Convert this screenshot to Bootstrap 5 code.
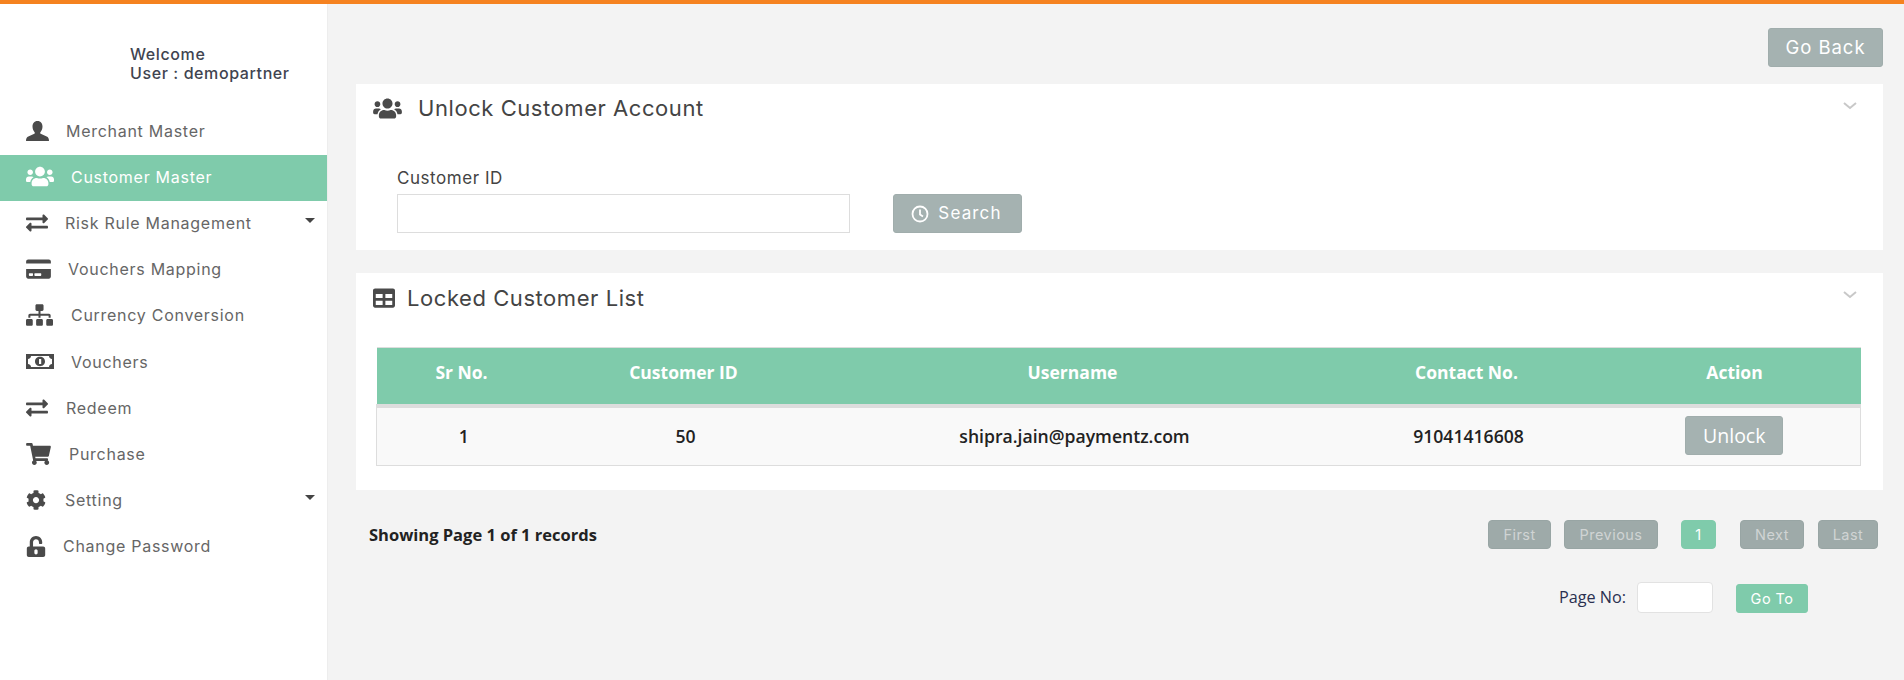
<!DOCTYPE html>
<html lang="en">
<head>
<meta charset="utf-8">
<title>Unlock Customer Account</title>
<link href="https://cdn.jsdelivr.net/npm/bootstrap@5.3.0/dist/css/bootstrap.min.css" rel="stylesheet">
<style>
html,body{height:100%;overflow:hidden}
body{background:#f3f3f3;font-family:Inter,"Liberation Sans",sans-serif;color:#444}
.topstrip{height:4px;background:#f58220}
.shell{height:676px}
.sidepane{width:328px;flex:none;background:#fff;border-right:1px solid #ededed}
.welcomebox{padding:41px 0 0 130px;height:105px;font-size:16px;line-height:18.5px;font-weight:500;color:#3f4450;letter-spacing:.6px}
.menuitem{height:46.2px;display:flex;align-items:center;padding:0 0 3px 26px;font-size:16px;color:#666;letter-spacing:.72px;text-decoration:none}
.menuitem.onitem{background:#7fcbab;color:#fff}
.icobox{display:block;flex:none}
.icobox svg{display:block;fill:#4a4a4a}
.onitem .icobox svg{fill:#fff}
.w37{width:37px}.w38{width:38px}.w39{width:39px}.w40{width:40px}.w42{width:42px}.w43{width:43px}.w45{width:45px}
.caretmark{margin-left:auto;margin-right:12px;margin-top:-5px;width:0;height:0;border-left:5px solid transparent;border-right:5px solid transparent;border-top:5px solid #444}
.mainpane{padding:24px 21px 0 28px;min-width:0}
.backbtn,.graybtn{background:#a5b2b1;border:1px solid #a0adac;color:#fff;border-radius:3px}
.backbtn{width:115px;height:39px;font-size:18.500px;padding:1px 0 0;letter-spacing:.95px;display:block;margin-left:auto;margin-bottom:17px}
.panelbox{background:#fff;border:0;border-radius:0;position:relative}
.firstpanel{height:166px;margin-bottom:23px}
.secondpanel{height:217px;margin-bottom:30px}
.paneltitle{font-size:22px;font-weight:400;color:#444;letter-spacing:.56px;margin:0;display:flex;align-items:center;line-height:24px}
.firstpanel .paneltitle{padding:12px 0 0 17px}
.secondpanel .paneltitle{padding:13px 0 0 17px}
.paneltitle svg{fill:#4a4a4a;display:block;flex:none}
.chevmark{position:absolute;right:26px;top:18px;stroke:#c8c8c8;fill:none;stroke-width:2}
.formarea{padding:48px 0 0 41px;display:flex;align-items:flex-end}
.fieldlabel{font-size:17px;line-height:20px;margin-bottom:6px;color:#444;letter-spacing:.55px}
.idinput{width:453px;height:39px;border:1px solid #ddd;border-radius:0;padding:0 8px}
.searchbtn{width:129px;height:39px;margin-left:43px;font-size:17px;letter-spacing:1.15px;padding:0 2px 0 0;display:flex;align-items:center;justify-content:center;gap:9px}
.searchbtn svg{fill:none;stroke:#fff;stroke-width:1.8}
.tablewrap{padding:37px 22px 0 20px}
.locktable{table-layout:fixed;width:1484px;margin:0;font-family:"Open Sans",sans-serif;border-color:#ddd}
.colw170{width:170px}.colw274{width:274px}.colw504{width:504px}.colw284{width:284px}.colw252{width:252px}
.locktable th{background:#7fcbab;color:#fff;font-size:17.5px;font-weight:700;text-align:center;vertical-align:middle;height:58px;padding:0 0 8px;border-top:1px solid #ddd;border-bottom:4px solid #ddd;box-shadow:none}
.locktable td{background:#f9f9f9;font-size:17.6px;font-weight:600;color:#222;text-align:center;vertical-align:middle;height:60px;padding:0 0 1px 4px;border-bottom:1px solid #ddd;box-shadow:none}
.locktable td:first-child{border-left:1px solid #ddd}
.locktable td:last-child{border-right:1px solid #ddd;padding-left:0}
.unlockbtn{width:98px;height:39px;padding:0;font-size:19.5px;font-family:"Open Sans",sans-serif}
.pagerrow{padding:0 5px 0 13px;height:29px;margin-bottom:33px}
.recordtext{font-family:"Open Sans",sans-serif;font-size:16.5px;font-weight:700;color:#222;padding-top:2px}
.pagerbtn{height:29px;padding:0;font-size:14.5px;border-radius:4px;background:#9eaaa9;border:1px solid #98a5a4;color:#d0d4d4;letter-spacing:.45px}
.p63{width:63px}.p94{width:94px;margin-left:13px}.p64{width:64px;margin-left:24px}.p60{width:60px;margin-left:14px}
.pagecur{width:35px;margin-left:23px;background:#7fcbab;border-color:#7fcbab;color:#fff}
.gotorow{padding-right:75px}
.gotolabel{font-family:"Open Sans",sans-serif;font-size:16.2px;color:#2a3050;margin-right:11px}
.gotoinput{width:76px;height:31px;border:1px solid #e2e2e2;border-radius:4px;background:#fff;padding:0 6px}
.gotobtn{width:72px;height:29px;margin-left:23px;margin-top:2px;padding:0;font-size:14.5px;background:#7fcbab;border:1px solid #7fcbab;color:#fff;border-radius:3px;letter-spacing:.45px}
</style>
</head>
<body>
<svg width="0" height="0" class="d-block position-absolute">
<symbol id="i-users" viewBox="0 0 640 512"><path d="M96 224c35.300 0 64-28.700 64-64s-28.700-64-64-64-64 28.700-64 64 28.700 64 64 64zm448 0c35.300 0 64-28.700 64-64s-28.700-64-64-64-64 28.700-64 64 28.700 64 64 64zm32 32h-64c-17.600 0-33.500 7.100-45.100 18.600 40.300 22.100 68.900 62 75.100 109.400h66c17.700 0 32-14.300 32-32v-32c0-35.300-28.700-64-64-64zm-256 0c61.900 0 112-50.100 112-112S381.900 32 320 32 208 82.100 208 144s50.100 112 112 112zm76.800 32h-8.300c-20.800 10-43.900 16-68.500 16s-47.600-6-68.500-16h-8.300C179.600 288 128 339.600 128 403.200V432c0 26.500 21.500 48 48 48h288c26.500 0 48-21.500 48-48v-28.800c0-63.600-51.600-115.200-115.200-115.200zm-223.700-13.400C161.500 263.100 145.600 256 128 256H64c-35.300 0-64 28.700-64 64v32c0 17.700 14.300 32 32 32h65.900c6.300-47.400 34.900-87.300 75.200-109.400z"/></symbol>
<symbol id="i-swap" viewBox="0 0 512 512"><path d="M0 168v-16c0-13.255 10.745-24 24-24h360V80c0-21.367 25.899-32.042 40.971-16.971l80 80c9.372 9.373 9.372 24.569 0 33.941l-80 80C409.956 271.982 384 261.456 384 240v-48H24c-13.255 0-24-10.745-24-24zm488 152H128v-48c0-21.314-25.862-32.080-40.971-16.971l-80 80c-9.372 9.373-9.372 24.569 0 33.941l80 80C102.057 463.997 128 453.437 128 432v-48h360c13.255 0 24-10.745 24-24v-16c0-13.255-10.745-24-24-24z"/></symbol>
<symbol id="i-chev" viewBox="0 0 14 8"><path d="M1 1l6 5 6-5"/></symbol>
</svg>
<div class="topstrip"></div>
<div class="d-flex shell">
  <nav class="sidepane">
    <div class="welcomebox">Welcome<br>User : demopartner</div>
    <a class="menuitem" href="#"><span class="icobox w40"><svg width="23" height="20" viewBox="0 0 23 20"><path d="M11.500 0c3.400 0 5 2.500 5 5.600 0 2.300-.9 4.400-2.100 5.700-.4.500-.3 1.200.3 1.500l6 2.600c1.400.7 2.300 1.700 2.300 4.600H0c0-2.900.9-3.900 2.300-4.600l6-2.600c.6-.3.700-1 .3-1.500C7.400 10 6.500 7.900 6.500 5.600 6.500 2.500 8.100 0 11.500 0z"/></svg></span>Merchant Master</a>
    <a class="menuitem onitem" href="#"><span class="icobox w45"><svg width="28" height="23"><use href="#i-users"/></svg></span>Customer Master</a>
    <a class="menuitem" href="#"><span class="icobox w39"><svg width="22" height="22"><use href="#i-swap"/></svg></span>Risk Rule Management<span class="caretmark"></span></a>
    <a class="menuitem" href="#"><span class="icobox w42"><svg width="25" height="22" viewBox="0 0 576 512"><path d="M0 432c0 26.500 21.500 48 48 48h480c26.500 0 48-21.500 48-48V256H0v176zm192-68c0-6.600 5.400-12 12-12h136c6.600 0 12 5.400 12 12v40c0 6.600-5.400 12-12 12H204c-6.600 0-12-5.400-12-12v-40zm-128 0c0-6.600 5.400-12 12-12h72c6.600 0 12 5.400 12 12v40c0 6.600-5.400 12-12 12H76c-6.600 0-12-5.400-12-12v-40zM576 80v48H0V80c0-26.500 21.500-48 48-48h480c26.500 0 48 21.500 48 48z"/></svg></span>Vouchers Mapping</a>
    <a class="menuitem" href="#"><span class="icobox w45"><svg width="27" height="22" viewBox="0 0 640 512"><path d="M128 352H32c-17.670 0-32 14.330-32 32v96c0 17.670 14.330 32 32 32h96c17.670 0 32-14.330 32-32v-96c0-17.670-14.330-32-32-32zm-24-80h192v48h48v-48h192v48h48v-57.590c0-21.170-17.230-38.410-38.410-38.410H344v-64h40c17.670 0 32-14.330 32-32V32c0-17.670-14.330-32-32-32H256c-17.670 0-32 14.330-32 32v96c0 17.670 14.330 32 32 32h40v64H94.410C73.230 224 56 241.230 56 262.410V320h48v-48zm264 80h-96c-17.670 0-32 14.330-32 32v96c0 17.670 14.330 32 32 32h96c17.670 0 32-14.330 32-32v-96c0-17.670-14.330-32-32-32zm240 0h-96c-17.670 0-32 14.330-32 32v96c0 17.670 14.330 32 32 32h96c17.670 0 32-14.330 32-32v-96c0-17.670-14.330-32-32-32z"/></svg></span>Currency Conversion</a>
    <a class="menuitem" href="#"><span class="icobox w45"><svg width="28" height="15" viewBox="0 0 28 15"><path fill-rule="evenodd" d="M0 0h28v15H0zM2 2v11h24V2z"/><path d="M2 2h3c0 1.600-1.400 3-3 3zM26 2h-3c0 1.600 1.400 3 3 3zM2 13h3c0-1.600-1.400-3-3-3zM26 13h-3c0-1.600 1.400-3 3-3z"/><path fill-rule="evenodd" d="M14 2.800c-2.900 0-5 2-5 4.700s2.100 4.700 5 4.700 5-2 5-4.700-2.100-4.700-5-4.700zM13 5h2.200v5H13z"/></svg></span>Vouchers</a>
    <a class="menuitem" href="#"><span class="icobox w40"><svg width="22" height="22"><use href="#i-swap"/></svg></span>Redeem</a>
    <a class="menuitem" href="#"><span class="icobox w43"><svg width="25" height="22" viewBox="0 0 576 512"><path d="M528.120 301.319l47.273-208C578.806 78.301 567.391 64 551.990 64H159.208l-9.166-44.810C147.758 8.021 137.930 0 126.529 0H24C10.745 0 0 10.745 0 24v16c0 13.255 10.745 24 24 24h69.883l70.248 343.435C147.325 417.100 136 435.222 136 456c0 30.928 25.072 56 56 56s56-25.072 56-56c0-15.674-6.447-29.835-16.824-40h209.647C430.447 426.165 424 440.326 424 456c0 30.928 25.072 56 56 56s56-25.072 56-56c0-22.172-12.888-41.332-31.579-50.405l5.517-24.276c3.413-15.018-8.002-29.319-23.403-29.319H218.117l-6.545-32h293.145c11.206 0 20.920-7.754 23.403-18.681z"/></svg></span>Purchase</a>
    <a class="menuitem" href="#"><span class="icobox w39"><svg width="20" height="20" viewBox="0 0 512 512"><path d="M487.400 315.700l-42.600-24.600c4.300-23.200 4.300-47 0-70.200l42.600-24.600c4.900-2.800 7.100-8.600 5.500-14-11.100-35.600-30-67.800-54.700-94.600-3.800-4.100-10-5.100-14.800-2.300L380.800 110c-17.900-15.400-38.500-27.300-60.800-35.100V25.800c0-5.600-3.900-10.500-9.400-11.700-36.700-8.200-74.300-7.800-109.200 0-5.500 1.200-9.400 6.100-9.400 11.700V75c-22.200 7.900-42.800 19.800-60.800 35.100L88.700 85.500c-4.900-2.800-11-1.900-14.800 2.300-24.700 26.700-43.600 58.900-54.700 94.600-1.700 5.400.6 11.200 5.500 14L67.300 221c-4.300 23.200-4.300 47 0 70.200l-42.600 24.600c-4.900 2.800-7.100 8.600-5.500 14 11.100 35.600 30 67.800 54.700 94.600 3.800 4.100 10 5.100 14.800 2.300l42.600-24.600c17.900 15.400 38.500 27.300 60.800 35.100v49.200c0 5.600 3.900 10.500 9.400 11.700 36.700 8.200 74.300 7.800 109.200 0 5.500-1.200 9.400-6.100 9.400-11.700v-49.200c22.200-7.900 42.800-19.800 60.800-35.100l42.600 24.600c4.900 2.800 11 1.900 14.800-2.300 24.700-26.700 43.600-58.900 54.700-94.600 1.500-5.500-.7-11.300-5.600-14.100zM256 336c-44.100 0-80-35.900-80-80s35.900-80 80-80 80 35.900 80 80-35.900 80-80 80z"/></svg></span>Setting<span class="caretmark"></span></a>
    <a class="menuitem" href="#"><span class="icobox w37"><svg width="20" height="21" viewBox="0 0 448 512"><path d="M400 256H152V152.900c0-39.600 31.700-72.500 71.300-72.900 40-.4 72.700 32.100 72.700 72v16c0 13.300 10.700 24 24 24h32c13.300 0 24-10.700 24-24v-16C376 68 307.500-.3 223.500 0 139.500.3 72 69.500 72 153.500V256H48c-26.500 0-48 21.500-48 48v160c0 26.500 21.500 48 48 48h352c26.500 0 48-21.500 48-48V304c0-26.500-21.500-48-48-48zM264 408c0 22.100-17.900 40-40 40s-40-17.900-40-40v-48c0-22.100 17.900-40 40-40s40 17.900 40 40v48z"/></svg></span>Change Password</a>
  </nav>
  <main class="flex-grow-1 mainpane">
    <button class="btn backbtn" type="button">Go Back</button>
    <section class="card panelbox firstpanel">
      <h2 class="paneltitle"><svg width="29" height="23" class="me-3"><use href="#i-users"/></svg>Unlock Customer Account</h2>
      <svg class="chevmark" width="14" height="8"><use href="#i-chev"/></svg>
      <div class="formarea">
        <div>
          <label class="d-block fieldlabel" for="cid">Customer ID</label>
          <input id="cid" class="form-control idinput" type="text">
        </div>
        <button class="btn graybtn searchbtn" type="button"><svg width="18" height="18" viewBox="0 0 18 18"><circle cx="9" cy="9" r="7.500"/><path d="M9 4.500V9.500l3 2"/></svg>Search</button>
      </div>
    </section>
    <section class="card panelbox secondpanel">
      <h2 class="paneltitle"><svg width="22" height="22" class="me-2" viewBox="0 0 512 512"><path d="M464 32H48C21.490 32 0 53.490 0 80v352c0 26.510 21.490 48 48 48h416c26.510 0 48-21.490 48-48V80c0-26.510-21.490-48-48-48zM224 416H64v-96h160v96zm0-160H64v-96h160v96zm224 160H288v-96h160v96zm0-160H288v-96h160v96z"/></svg><span class="ms-1">Locked Customer List</span></h2>
      <svg class="chevmark" width="14" height="8"><use href="#i-chev"/></svg>
      <div class="tablewrap">
        <table class="table locktable">
          <colgroup><col class="colw170"><col class="colw274"><col class="colw504"><col class="colw284"><col class="colw252"></colgroup>
          <thead><tr><th>Sr No.</th><th>Customer ID</th><th>Username</th><th>Contact No.</th><th>Action</th></tr></thead>
          <tbody><tr><td>1</td><td>50</td><td>shipra.jain@paymentz.com</td><td>91041416608</td><td><button class="btn graybtn unlockbtn" type="button">Unlock</button></td></tr></tbody>
        </table>
      </div>
    </section>
    <div class="d-flex align-items-center pagerrow">
      <div class="recordtext me-auto">Showing Page 1 of 1 records</div>
      <button class="btn pagerbtn p63" type="button">First</button>
      <button class="btn pagerbtn p94" type="button">Previous</button>
      <button class="btn pagerbtn pagecur" type="button">1</button>
      <button class="btn pagerbtn p64" type="button">Next</button>
      <button class="btn pagerbtn p60" type="button">Last</button>
    </div>
    <div class="d-flex justify-content-end align-items-center gotorow">
      <label class="gotolabel" for="pg">Page No:</label>
      <input id="pg" class="gotoinput" type="text">
      <button class="btn gotobtn" type="button">Go To</button>
    </div>
  </main>
</div>
<script src="https://cdn.jsdelivr.net/npm/bootstrap@5.3.0/dist/js/bootstrap.bundle.min.js"></script>
</body>
</html>
